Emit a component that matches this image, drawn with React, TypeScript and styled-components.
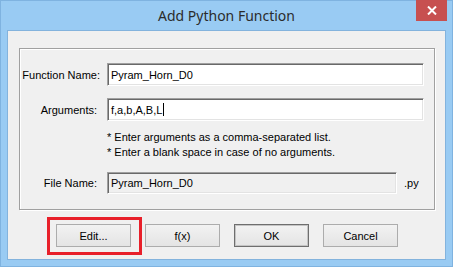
import React from "react";
import styled, { createGlobalStyle } from "styled-components";

const Global = createGlobalStyle`
  html, body { margin: 0; padding: 0; }
  body {
    width: 453px;
    height: 267px;
    overflow: hidden;
    font-family: "Liberation Sans", Arial, sans-serif;
    font-size: 11px;
    color: #000;
  }
`;

const Window = styled.div`
  position: relative;
  box-sizing: border-box;
  width: 453px;
  height: 267px;
  background: #99cbf3;
  border: 1px solid #7fb3e0;
  padding: 0 6px 6px 6px;
  display: flex;
  flex-direction: column;
`;

const TitleBar = styled.div`
  height: 29px;
  display: flex;
  align-items: center;
  justify-content: center;
`;

const Title = styled.span`
  font-family: "Noto Sans", "Open Sans", sans-serif;
  font-size: 14px;
  color: #2b2b2b;
  margin-top: -1px;
`;

const CloseButton = styled.div`
  position: absolute;
  top: -1px;
  right: 5px;
  width: 31px;
  height: 21px;
  background: #c75050;
  display: flex;
  align-items: center;
  justify-content: center;
`;

const Client = styled.div`
  flex: 1;
  background: #f0f0f0;
  border: 1px solid #83b3dd;
  padding: 17px 10px 0 11px;
  display: flex;
  flex-direction: column;
`;

const GroupBox = styled.div`
  box-sizing: border-box;
  flex: none;
  height: 162px;
  border: 1px solid #a0a0a0;
  box-shadow: inset 1px 1px 0 #fff, 1px 1px 0 #fff;
  padding: 14px 10px 0 0;
  display: flex;
  flex-direction: column;
`;

const Row = styled.div<{ $top?: number }>`
  display: flex;
  align-items: center;
  margin-top: ${(p) => p.$top ?? 0}px;
`;

const Label = styled.div<{ $inset?: number }>`
  width: 80px;
  box-sizing: border-box;
  text-align: right;
  padding-right: ${(p) => p.$inset ?? 0}px;
  margin-right: 7px;
  white-space: nowrap;
`;

const Field = styled.div<{ $readOnly?: boolean; $width?: number; $height?: number }>`
  box-sizing: border-box;
  ${(p) => (p.$width ? `width: ${p.$width}px;` : "flex: 1;")}
  height: ${(p) => p.$height ?? 23}px;
  background: ${(p) => (p.$readOnly ? "#f0f0f0" : "#fff")};
  border: 1px solid;
  border-color: #a0a0a0 #fff #fff #a0a0a0;
  box-shadow: inset 1px 1px 0 #696969, inset -1px -1px 0 #e3e3e3;
  padding: 0 3px;
  display: flex;
  align-items: center;
  white-space: nowrap;
`;

const Caret = styled.span`
  display: inline-block;
  width: 1px;
  height: 13px;
  background: #000;
  margin-left: 1px;
`;

const Notes = styled.div`
  margin: 9px 0 0 87px;
  line-height: 15px;
`;

const Suffix = styled.div`
  margin-left: 7px;
`;

const ButtonRow = styled.div`
  display: flex;
  gap: 14px;
  margin-top: 14px;
  padding-left: 37px;
`;

const ButtonWrap = styled.div`
  position: relative;
`;

const Button = styled.div<{ $default?: boolean }>`
  box-sizing: border-box;
  width: 75px;
  height: 23px;
  display: flex;
  align-items: center;
  justify-content: center;
  background: linear-gradient(#f2f2f2, #e4e4e4);
  border: 1px solid ${(p) => (p.$default ? "#6e6e6e" : "#acacac")};
  box-shadow: ${(p) => (p.$default ? "inset 0 0 0 1px #c4c4c4" : "none")};
`;

const Highlight = styled.div`
  position: absolute;
  left: -9px;
  top: -7px;
  width: 95px;
  height: 38px;
  box-sizing: border-box;
  border: 3px solid #e8202a;
  pointer-events: none;
`;

export default function App() {
  return (
    <>
      <Global />
      <Window>
        <TitleBar>
          <Title>Add Python Function</Title>
        </TitleBar>
        <CloseButton>
          <svg width="10" height="9" viewBox="0 0 10 9">
            <path d="M1 0.5 L9 8.5 M9 0.5 L1 8.5" stroke="#fff" strokeWidth="2" />
          </svg>
        </CloseButton>
        <Client>
          <GroupBox>
            <Row>
              <Label>Function Name:</Label>
              <Field>Pyram_Horn_D0</Field>
            </Row>
            <Row $top={12}>
              <Label $inset={3}>Arguments:</Label>
              <Field>
                f,a,b,A,B,L
                <Caret />
              </Field>
            </Row>
            <Notes>
              <div>* Enter arguments as a comma-separated list.</div>
              <div>* Enter a blank space in case of no arguments.</div>
            </Notes>
            <Row $top={12}>
              <Label $inset={3}>File Name:</Label>
              <Field $readOnly $width={290} $height={22}>
                Pyram_Horn_D0
              </Field>
              <Suffix>.py</Suffix>
            </Row>
          </GroupBox>
          <ButtonRow>
            <ButtonWrap>
              <Button>Edit...</Button>
              <Highlight />
            </ButtonWrap>
            <Button>f(x)</Button>
            <Button $default>OK</Button>
            <Button>Cancel</Button>
          </ButtonRow>
        </Client>
      </Window>
    </>
  );
}
